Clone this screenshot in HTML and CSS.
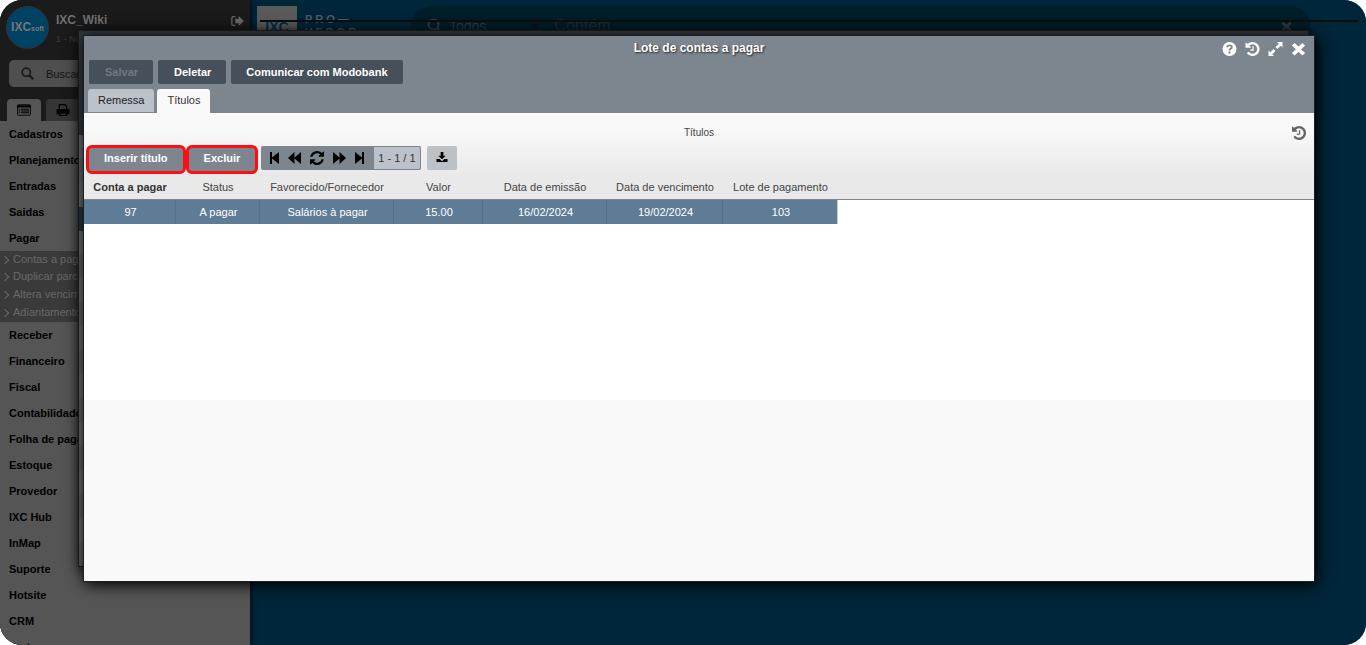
FILE: index.html
```html
<!DOCTYPE html>
<html lang="pt-BR">
<head>
<meta charset="utf-8">
<title>Lote de contas a pagar</title>
<link rel="stylesheet" href="styles.css">
</head>
<body>
<svg class="defs" aria-hidden="true">
  <symbol id="history" viewBox="0 0 1536 1536"><path d="M1536 768q0 156-61 298t-164 245-245 164-298 61q-172 0-327-72.500t-264-204.500q-7-10-6.500-22.500t8.500-20.500l137-138q10-9 25-9 16 2 23 12 73 95 179 147t225 52q104 0 198.500-40.500t163.500-109.500 109.500-163.500 40.500-198.500-40.500-198.500-109.500-163.500-163.500-109.500-198.500-40.500q-98 0-188 35.500t-160 101.500l137 138q31 30 14 69-17 40-59 40h-448q-26 0-45-19t-19-45v-448q0-42 40-59 39-17 69 14l130 129q107-101 244.500-156.500t284.500-55.500q156 0 298 61t245 164 164 245 61 298zM896 480v448q0 14-9 23t-23 9h-320q-14 0-23-9t-9-23v-64q0-14 9-23t23-9h224v-352q0-14 9-23t23-9h64q14 0 23 9t9 23z"/></symbol>
  <symbol id="close" viewBox="0 0 16 16"><path d="M3.500 1 8 5.200 12.500 1 15.500 4 11 8.200l4.500 4.300-3 3L8 11.200l-4.500 4.300-3-3L5 8.200.5 4z"/></symbol>
  <symbol id="search" viewBox="0 0 16 16"><circle cx="6.500" cy="6.500" r="5" fill="none" stroke="currentColor" stroke-width="2.200"/><path d="m10 10 5 5" stroke="currentColor" stroke-width="2.800"/></symbol>
</svg>
<div class="app">
  <aside class="sidebar">
    <header class="profile">
      <div class="profile-logo"><b>IXC</b><span>soft</span></div>
      <div class="profile-text"><strong>IXC_Wiki</strong><small>1 - Nome da filial</small></div>
      <button class="logout" type="button" aria-label="Sair"><svg viewBox="0 0 16 14"><path d="M6 2H3.500A1.500 1.500 0 0 0 2 3.500v7A1.500 1.500 0 0 0 3.500 12H6" fill="none" stroke="currentColor" stroke-width="1.500"/><path d="M6 4.500h4V1.200L16 7l-6 5.800V9.500H6z"/></svg></button>
    </header>
    <label class="search"><svg class="search-icon"><use href="#search"/></svg><input type="text" placeholder="Buscar" aria-label="Buscar"></label>
    <div class="side-tabs">
      <button class="side-tab current" type="button" aria-label="Menu"><svg viewBox="0 0 16 13"><path d="M1.500.5h13a1 1 0 0 1 1 1v10a1 1 0 0 1-1 1h-13a1 1 0 0 1-1-1v-10a1 1 0 0 1 1-1z" fill="none" stroke="currentColor"/><path d="M0 1h16v2.500H0zM2 5h1.500v1.200H2zm2.500 0H14v1.200H4.500zM2 7h1.500v1.200H2zM4.500 7H14v1.200H4.500zM2 9h1.500v1.200H2zM4.500 9H14v1.200H4.500z"/></svg></button>
      <button class="side-tab" type="button" aria-label="Imprimir"><svg viewBox="0 0 14 13"><path d="M3 6V.7h6l2 2V6" fill="none" stroke="currentColor" stroke-width="1.400"/><path d="M1.500 5.500h11A1.500 1.500 0 0 1 14 7v4h-2.500V9h-9v2H0V7a1.500 1.500 0 0 1 1.500-1.500z"/><path d="M3.200 9.500h7.600v2.800H3.200z" fill="none" stroke="currentColor" stroke-width="1.400"/></svg></button>
    </div>
    <nav class="menu">
      <a href="#">Cadastros</a><a href="#">Planejamento</a><a href="#">Entradas</a><a href="#">Saidas</a><a href="#">Pagar</a>
      <div class="submenu"><a href="#">Contas a pagar</a><a href="#">Duplicar parcelas</a><a href="#">Altera vencimento</a><a href="#">Adiantamento</a></div>
      <a href="#">Receber</a><a href="#">Financeiro</a><a href="#">Fiscal</a><a href="#">Contabilidade</a><a href="#">Folha de pagamento</a><a href="#">Estoque</a><a href="#">Provedor</a><a href="#">IXC Hub</a><a href="#">InMap</a><a href="#">Suporte</a><a href="#">Hotsite</a><a href="#">CRM</a><a href="#">Frota</a>
    </nav>
  </aside>
  <main class="desktop">
    <div class="topbar">
      <div class="brand"><span class="brand-mark">IXC</span><span class="brand-name">PRO—<br>VEDOR</span></div>
      <div class="finder"><svg class="finder-icon"><use href="#search"/></svg><span class="finder-scope">Todos</span><i class="caret"></i><span class="finder-mode">Contém</span><svg class="finder-close"><use href="#close"/></svg></div>
    </div>
  </main>
  <div class="rule"></div>
  <section class="window back" aria-hidden="true"><div class="back-head"></div><div class="back-rows"></div></section>
  <section class="window front" role="dialog" aria-labelledby="title">
    <header class="head">
      <div class="titlebar">
        <h1 id="title">Lote de contas a pagar</h1>
        <div class="window-actions">
          <button type="button" aria-label="Ajuda"><svg viewBox="0 0 14 14"><circle cx="7" cy="7" r="7"/><path d="M4.700 5.300C4.900 2.700 9.300 2.700 9.300 5.200 9.300 6.700 7 6.800 7 8.500" fill="none" stroke="#7d868f" stroke-width="1.900"/><path d="M6 9.600h2v2H6z" fill="#7d868f"/></svg></button>
          <button type="button" aria-label="Histórico"><svg><use href="#history"/></svg></button>
          <button type="button" aria-label="Maximizar"><svg viewBox="0 0 14 14"><path d="M8.500 0H14v5.500L12.200 3.700 8.900 7 7 5.100l3.300-3.300zM5.500 14H0V8.500l1.800 1.800L5.100 7 7 8.900l-3.300 3.300z"/></svg></button>
          <button type="button" aria-label="Fechar"><svg><use href="#close"/></svg></button>
        </div>
      </div>
      <div class="commands"><button type="button" disabled>Salvar</button><button type="button">Deletar</button><button type="button">Comunicar com Modobank</button></div>
      <div class="tabs"><button class="tab" type="button">Remessa</button><button class="tab active" type="button">Títulos</button></div>
    </header>
    <div class="grid-top">
      <div class="caption"><h2>Títulos</h2><button type="button" aria-label="Histórico de títulos"><svg><use href="#history"/></svg></button></div>
      <div class="toolbar">
        <div class="marked"><button class="action" type="button">Inserir título</button><button class="action" type="button">Excluir</button></div>
        <div class="pager">
          <button type="button" aria-label="Primeira"><svg class="narrow" viewBox="0 0 9 12"><path d="M0 0h2v5.500L9 0v12L2 6.500V12H0z"/></svg></button>
          <button type="button" aria-label="Anterior"><svg viewBox="0 0 13 12"><path d="M0 6 6.500 0v5.500L13 0v12L6.500 6.500V12z"/></svg></button>
          <button type="button" aria-label="Atualizar"><svg class="wide" viewBox="0 0 1536 1536"><path d="M1511 928q0 5-1 7-64 268-268 434.500T764 1536q-146 0-282.500-55T238 1324l-129 129q-19 19-45 19t-45-19-19-45V960q0-26 19-45t45-19h448q26 0 45 19t19 45-19 45l-137 137q71 66 161 102t187 36q134 0 250-65t186-179q11-17 53-117 8-23 30-23h192q13 0 22.500 9.500t9.500 22.500zM1536 128v448q0 26-19 45t-45 19h-448q-26 0-45-19t-19-45 19-45l138-138Q969 256 768 256q-134 0-250 65T332 500q-11 17-53 117-8 23-30 23H50q-13 0-22.500-9.500T18 608v-7q65-268 270-434.500T768 0q146 0 284 55.500T1297 212l130-129q19-19 45-19t45 19 19 45z"/></svg></button>
          <button type="button" aria-label="Próxima"><svg viewBox="0 0 13 12"><path d="M13 6 6.500 0v5.500L0 0v12l6.500-5.500V12z"/></svg></button>
          <button type="button" aria-label="Última"><svg class="narrow" viewBox="0 0 9 12"><path d="M9 0H7v5.500L0 0v12l7-5.500V12h2z"/></svg></button>
          <output>1 - 1 / 1</output>
        </div>
        <button class="download" type="button" aria-label="Baixar"><svg viewBox="0 0 12 12"><path d="M4.500 0h3v4H10L6 8 2 4h2.500zM0 7.500h3.300L6 10l2.700-2.500H12V11H0z"/></svg></button>
      </div>
    </div>
    <div class="table-wrap">
      <table>
        <colgroup><col class="c1"><col class="c2"><col class="c3"><col class="c4"><col class="c5"><col class="c6"><col class="c7"><col></colgroup>
        <thead><tr><th class="sorted">Conta a pagar</th><th>Status</th><th>Favorecido/Fornecedor</th><th>Valor</th><th>Data de emissão</th><th>Data de vencimento</th><th>Lote de pagamento</th><th class="rest"></th></tr></thead>
        <tbody><tr><td>97</td><td>A pagar</td><td>Salários à pagar</td><td>15.00</td><td>16/02/2024</td><td>19/02/2024</td><td>103</td><td class="rest"></td></tr></tbody>
      </table>
    </div>
    <div class="form-area"></div>
  </section>
</div>
</body>
</html>
```
FILE: styles.css
```css
* { box-sizing: border-box; }
body { margin: 0; background: #fff; font: 11px/16px "Liberation Sans", Arial, sans-serif; }
button, input { font: inherit; color: inherit; border: 0; padding: 0; margin: 0; background: none; }
a { color: inherit; text-decoration: none; }
svg { display: block; fill: currentColor; }
h1, h2 { margin: 0; }
.defs { display: none; }
.app { position: relative; display: flex; height: 100vh; border-radius: 22px; overflow: hidden; background: #002639; }

.sidebar { flex: 0 0 250px; overflow: hidden; background: #1b1b1b; box-shadow: 0 0 6px #000; z-index: 1; }
.profile { display: flex; height: 60px; padding: 6px 6px 0; gap: 7px; }
.profile-logo { display: flex; align-items: baseline; justify-content: center; width: 43px; height: 43px; border: 1px solid #303438; border-radius: 50%; background: #004264; color: #777; line-height: 41px; }
.profile-logo b { font-size: 12px; }
.profile-logo span { font-size: 7px; font-weight: bold; }
.profile-text { display: flex; flex: 1; flex-direction: column; padding-top: 6px; gap: 5px; color: #707070; }
.profile-text strong { font-size: 12px; }
.profile-text small { font-size: 9px; line-height: 12px; color: #3c3c3c; }
.logout { width: 14px; height: 30px; color: #696969; }
.logout svg { width: 14px; height: 12px; }
.search { display: flex; align-items: center; height: 27px; margin: 0 9px; padding-left: 12px; gap: 12px; border-radius: 5px; background: #4f4f4f; color: #1b1b1b; }
.search-icon { width: 13px; height: 13px; }
.search input { flex: 1; min-width: 0; }
.search input::placeholder { color: #141414; opacity: 1; }
.side-tabs { display: flex; gap: 5px; height: 34px; padding: 12px 7px 0; }
.side-tab { display: grid; place-items: center; width: 34px; height: 22px; border-radius: 4px 4px 0 0; background: #353535; color: #000; }
.side-tab.current { background: #555; }
.side-tab svg { width: 14px; height: 12px; }
.menu { height: 100%; background: #555; color: #000; font-weight: bold; }
.menu a { display: block; height: 26px; padding-left: 9px; line-height: 26px; white-space: nowrap; }
.submenu { background: #3a3a3a; color: #686868; font-weight: normal; }
.submenu a { position: relative; height: 18px; padding-left: 13px; line-height: 17px; }
.submenu a:first-child { height: 17px; }
.submenu a::before { content: ""; position: absolute; left: 2px; top: 6px; width: 5px; height: 5px; border: solid #686868; border-width: 1px 1px 0 0; transform: rotate(45deg); }

.desktop { flex: 1; min-width: 0; padding-top: 6px; background: #002639; }
.topbar { display: flex; gap: 112px; padding: 0 56px 0 7px; }
.brand { display: flex; gap: 8px; flex: 0 0 42px; min-width: 0; }
.brand-mark { flex: 0 0 40px; height: 40px; background: #5a5a5a; color: #002d45; font: bold 14px/42px "Liberation Sans", Arial, sans-serif; text-align: center; }
.brand-name { padding-top: 7px; color: #4b5a63; font: bold 11px/13px "Liberation Sans", Arial, sans-serif; letter-spacing: 3px; }
.finder { display: flex; align-items: center; flex: 1; height: 40px; padding: 0 18px 0 16px; border-radius: 20px; background: #001e2a; color: #303b40; font-size: 14px; }
.finder-icon { width: 16px; height: 16px; }
.finder-scope { padding-left: 6px; }
.caret { margin: 0 14px 0 44px; border: 5px solid transparent; border-top-color: #0b1216; border-bottom: 0; }
.finder-mode { flex: 1; color: #222b2f; font-size: 16px; }
.finder-close { width: 11px; height: 11px; }
.rule { position: absolute; z-index: 2; top: 20px; left: 260px; right: 8px; height: 2px; background: #0c0e0f; }

.window { position: absolute; z-index: 3; border: 1px solid #1b1e22; box-shadow: 2px 3px 14px #000; }
.back { top: 30px; left: 78px; right: 57px; bottom: 78px; background: #666; }
.back-head { height: 104px; background: #30363b; }
.back-rows { height: calc(100% - 104px); background: linear-gradient(transparent 72px, #24333f 72px 96px, transparent 96px), repeating-linear-gradient(#686868 0 24px, #5f5f5f 24px 48px); }
.front { top: 35px; left: 83px; right: 51px; bottom: 63px; display: flex; flex-direction: column; background: #f9f9f9; }
.head { background: #7d868f; color: #fff; }
.titlebar { display: grid; grid-template-columns: 1fr auto 1fr; height: 24px; }
.titlebar h1 { grid-column: 2; font-size: 12px; line-height: 24px; text-shadow: 1px 1px 2px #222; }
.window-actions { display: flex; justify-content: flex-end; gap: 8px; padding: 6px 8px 0 0; }
.window-actions button { height: 14px; }
.window-actions svg { width: 15px; height: 14px; }
.commands { display: flex; gap: 5px; padding: 0 5px; }
.commands button { height: 24px; padding: 0 15px; border-radius: 2px; background: #46505a; font-weight: bold; }
.commands button:not(:last-child) { padding-left: 16px; }
.commands button:disabled { color: #6f7881; }
.tabs { display: flex; gap: 3px; padding: 5px 4px 0; }
.tab { height: 23px; margin-bottom: 1px; padding: 0 10px 2px; border-radius: 3px 3px 0 0; background: #bcc2ca; color: #222; }
.tab.active { height: 24px; margin: 0; background: #f9f9f9; color: #333; }
.grid-top { background: linear-gradient(#f9f9f9 15px, #e9e9e9); color: #444; }
.caption { display: grid; grid-template-columns: 1fr auto 1fr; align-items: center; height: 32px; padding: 7px 0 0; }
.caption h2 { grid-column: 2; font-size: 10px; font-weight: normal; }
.caption button { justify-self: end; margin-right: 8px; color: #666; }
.caption svg { width: 14px; height: 14px; }
.toolbar { display: flex; align-items: flex-start; height: 31px; padding-left: 2px; }
.marked { display: flex; margin-right: 3px; }
.action { height: 29px; padding: 0 15px 3px; border: 3px solid #ff0d12; border-radius: 6px; background: #7d868f; color: #fff; font-weight: bold; line-height: 20px; }
.pager { display: flex; align-items: center; height: 24px; margin: 1px 6px 0 0; padding-left: 9px; border-radius: 2px; background: #7d868f; color: #000; }
.pager button { margin-right: 9px; }
.pager svg { width: 13px; height: 12px; }
.pager .narrow { width: 9px; }
.pager .wide { width: 14px; height: 14px; }
.pager output { height: 24px; padding: 0 4px; border: 1px solid #7d868f; border-radius: 0 2px 2px 0; background: #bcc2ca; color: #333; line-height: 22px; }
.download { display: grid; place-items: center; width: 30px; height: 24px; margin-top: 1px; padding-bottom: 2px; border-radius: 2px; background: #bcc1c5; color: #000; }
.download svg { width: 12px; height: 11px; }
.table-wrap { height: 224px; background: #fff; }
table { width: 100%; border-collapse: separate; border-spacing: 0; table-layout: fixed; }
.c1 { width: 92px; } .c2 { width: 84px; } .c3 { width: 134px; } .c4 { width: 89px; } .c5 { width: 124px; } .c6 { width: 116px; } .c7 { width: 115px; }
th { height: 24px; padding: 0 0 2px; border-bottom: 1px solid #7d868f; background: #e9e9e9; color: #444; font-weight: normal; white-space: nowrap; }
th.sorted { color: #333; font-weight: bold; }
td { height: 24px; padding: 0 0 0 2px; border-right: 1px solid #55728b; background: #5f7c96; color: #fff; text-align: center; }
td:nth-child(7) { border-right-color: #c4ccd4; }
td.rest { border: 0; background: none; }
.form-area { flex: 1; }
```
